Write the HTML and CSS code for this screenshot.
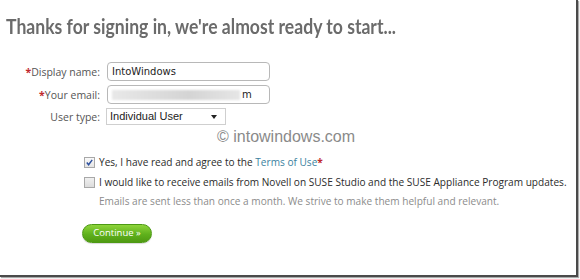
FILE: index.html
```html
<!DOCTYPE html>
<html>
<head>
<meta charset="utf-8">
<link rel="stylesheet" href="styles.css">
</head>
<body>
<div class="frame">
  <h1 class="title">Thanks for signing in, we're almost ready to start...</h1>
  <div class="form">
    <label class="label"><span class="req">*</span>Display name:</label>
    <div class="input">IntoWindows</div>
    <label class="label"><span class="req">*</span>Your email:</label>
    <div class="input email"><span class="blur"></span><span class="tail">m</span></div>
    <label class="label">User type:</label>
    <div class="select">Individual User<span class="caret"></span></div>
  </div>
  <div class="watermark">© intowindows.com</div>
  <div class="checks">
    <div class="check-row">
      <span class="box checked"><svg viewBox="0 0 10 10" width="9" height="9"><path d="M2 5 L4 7.5 L8 2" fill="none" stroke="#2c4f9e" stroke-width="1.6"/></svg></span>
      <span class="ctext">Yes, I have read and agree to the <a class="link">Terms of Use</a><span class="req">*</span></span>
    </div>
    <div class="check-row">
      <span class="box"></span>
      <span class="ctext">I would like to receive emails from Novell on SUSE Studio and the SUSE Appliance Program updates.</span>
    </div>
    <div class="note">Emails are sent less than once a month. We strive to make them helpful and relevant.</div>
  </div>
  <div class="actions">
    <button class="btn">Continue »</button>
  </div>
</div>
</body>
</html>
```
FILE: styles.css
```css
html, body {
  margin: 0;
  padding: 0;
  background: #fff;
}
body {
  width: 580px;
  height: 279px;
  overflow: hidden;
}
.frame {
  width: 576px;
  height: 275px;
  border-right: 2px solid #4a4a4a;
  border-bottom: 2px solid #4a4a4a;
  box-shadow: 1px 1px 1px #aaa;
  box-sizing: content-box;
  display: flex;
  flex-direction: column;
}
.title {
  margin: 0;
  padding: 15px 0 0 6px;
  font-family: Lato, "Open Sans", sans-serif;
  font-weight: 700;
  font-size: 20px;
  line-height: 22px;
  color: #6b6b6b;
  transform: scaleX(0.88);
  transform-origin: 6px 0;
  white-space: nowrap;
}
.form {
  display: grid;
  grid-template-columns: 100px 163px;
  column-gap: 7px;
  row-gap: 4px;
  margin-top: 25px;
  align-items: center;
}
.label {
  text-align: right;
  font-family: "Open Sans", sans-serif;
  font-size: 10.5px;
  color: #555;
}
.req {
  color: #c0282d;
  font-weight: 700;
}
.input {
  border: 1px solid #b8b8b8;
  border-radius: 4px;
  box-sizing: border-box;
  height: 19px;
  font-family: "DejaVu Sans", sans-serif;
  font-size: 10px;
  line-height: 16px;
  padding-left: 4px;
  color: #222;
  display: flex;
  align-items: center;
}
.email .blur {
  width: 128px;
  height: 10px;
  background: linear-gradient(90deg, #e8e8e8, #d4d4d4 60%, #e6e6e6);
  filter: blur(1px);
}
.email .tail {
  margin-left: 2px;
}
.select {
  width: 120px;
  height: 17px;
  box-sizing: border-box;
  border: 1px solid #cfcfcf;
  font-family: "Liberation Sans", Arial, sans-serif;
  font-size: 11px;
  line-height: 15px;
  padding-left: 3px;
  color: #222;
  display: flex;
  align-items: center;
  justify-content: space-between;
  margin-left: -1px;
}
.caret {
  width: 0;
  height: 0;
  border-left: 3px solid transparent;
  border-right: 3px solid transparent;
  border-top: 4px solid #222;
  margin-right: 8px;
}
.watermark {
  margin: 3px 0 0 217px;
  font-family: "Liberation Sans", Arial, sans-serif;
  font-size: 16px;
  line-height: 18px;
  color: #8a8a8a;
}
.checks {
  margin: 9px 0 0 84px;
  display: flex;
  flex-direction: column;
  gap: 6px;
}
.check-row {
  display: flex;
  align-items: center;
  gap: 4px;
}
.box {
  width: 9px;
  height: 9px;
  border: 1px solid #a8a8a8;
  background: linear-gradient(#f0f0f0, #dcdcdc);
  display: flex;
  align-items: center;
  justify-content: center;
}
.box.checked {
  background: linear-gradient(#fafafa, #e4e4e4);
}
.ctext, .note {
  font-family: "Open Sans", sans-serif;
  font-size: 10.1px;
  line-height: 14px;
  color: #2b2b2b;
}
.note {
  color: #8c8c8c;
  padding-left: 15px;
  margin-top: -1px;
}
.link {
  color: #3b7fa0;
}
.actions {
  margin: 14px 0 0 82px;
}
.btn {
  width: 70px;
  height: 19px;
  border: 1px solid #4d9a14;
  border-radius: 10px;
  background: linear-gradient(#8ed43a, #5fb11c 55%, #4f9a12);
  color: #fff;
  font-family: "Open Sans", sans-serif;
  font-size: 9.5px;
  line-height: 16px;
  padding: 0;
  box-shadow: 0 1px 1px rgba(0,0,0,0.15);
}
```
